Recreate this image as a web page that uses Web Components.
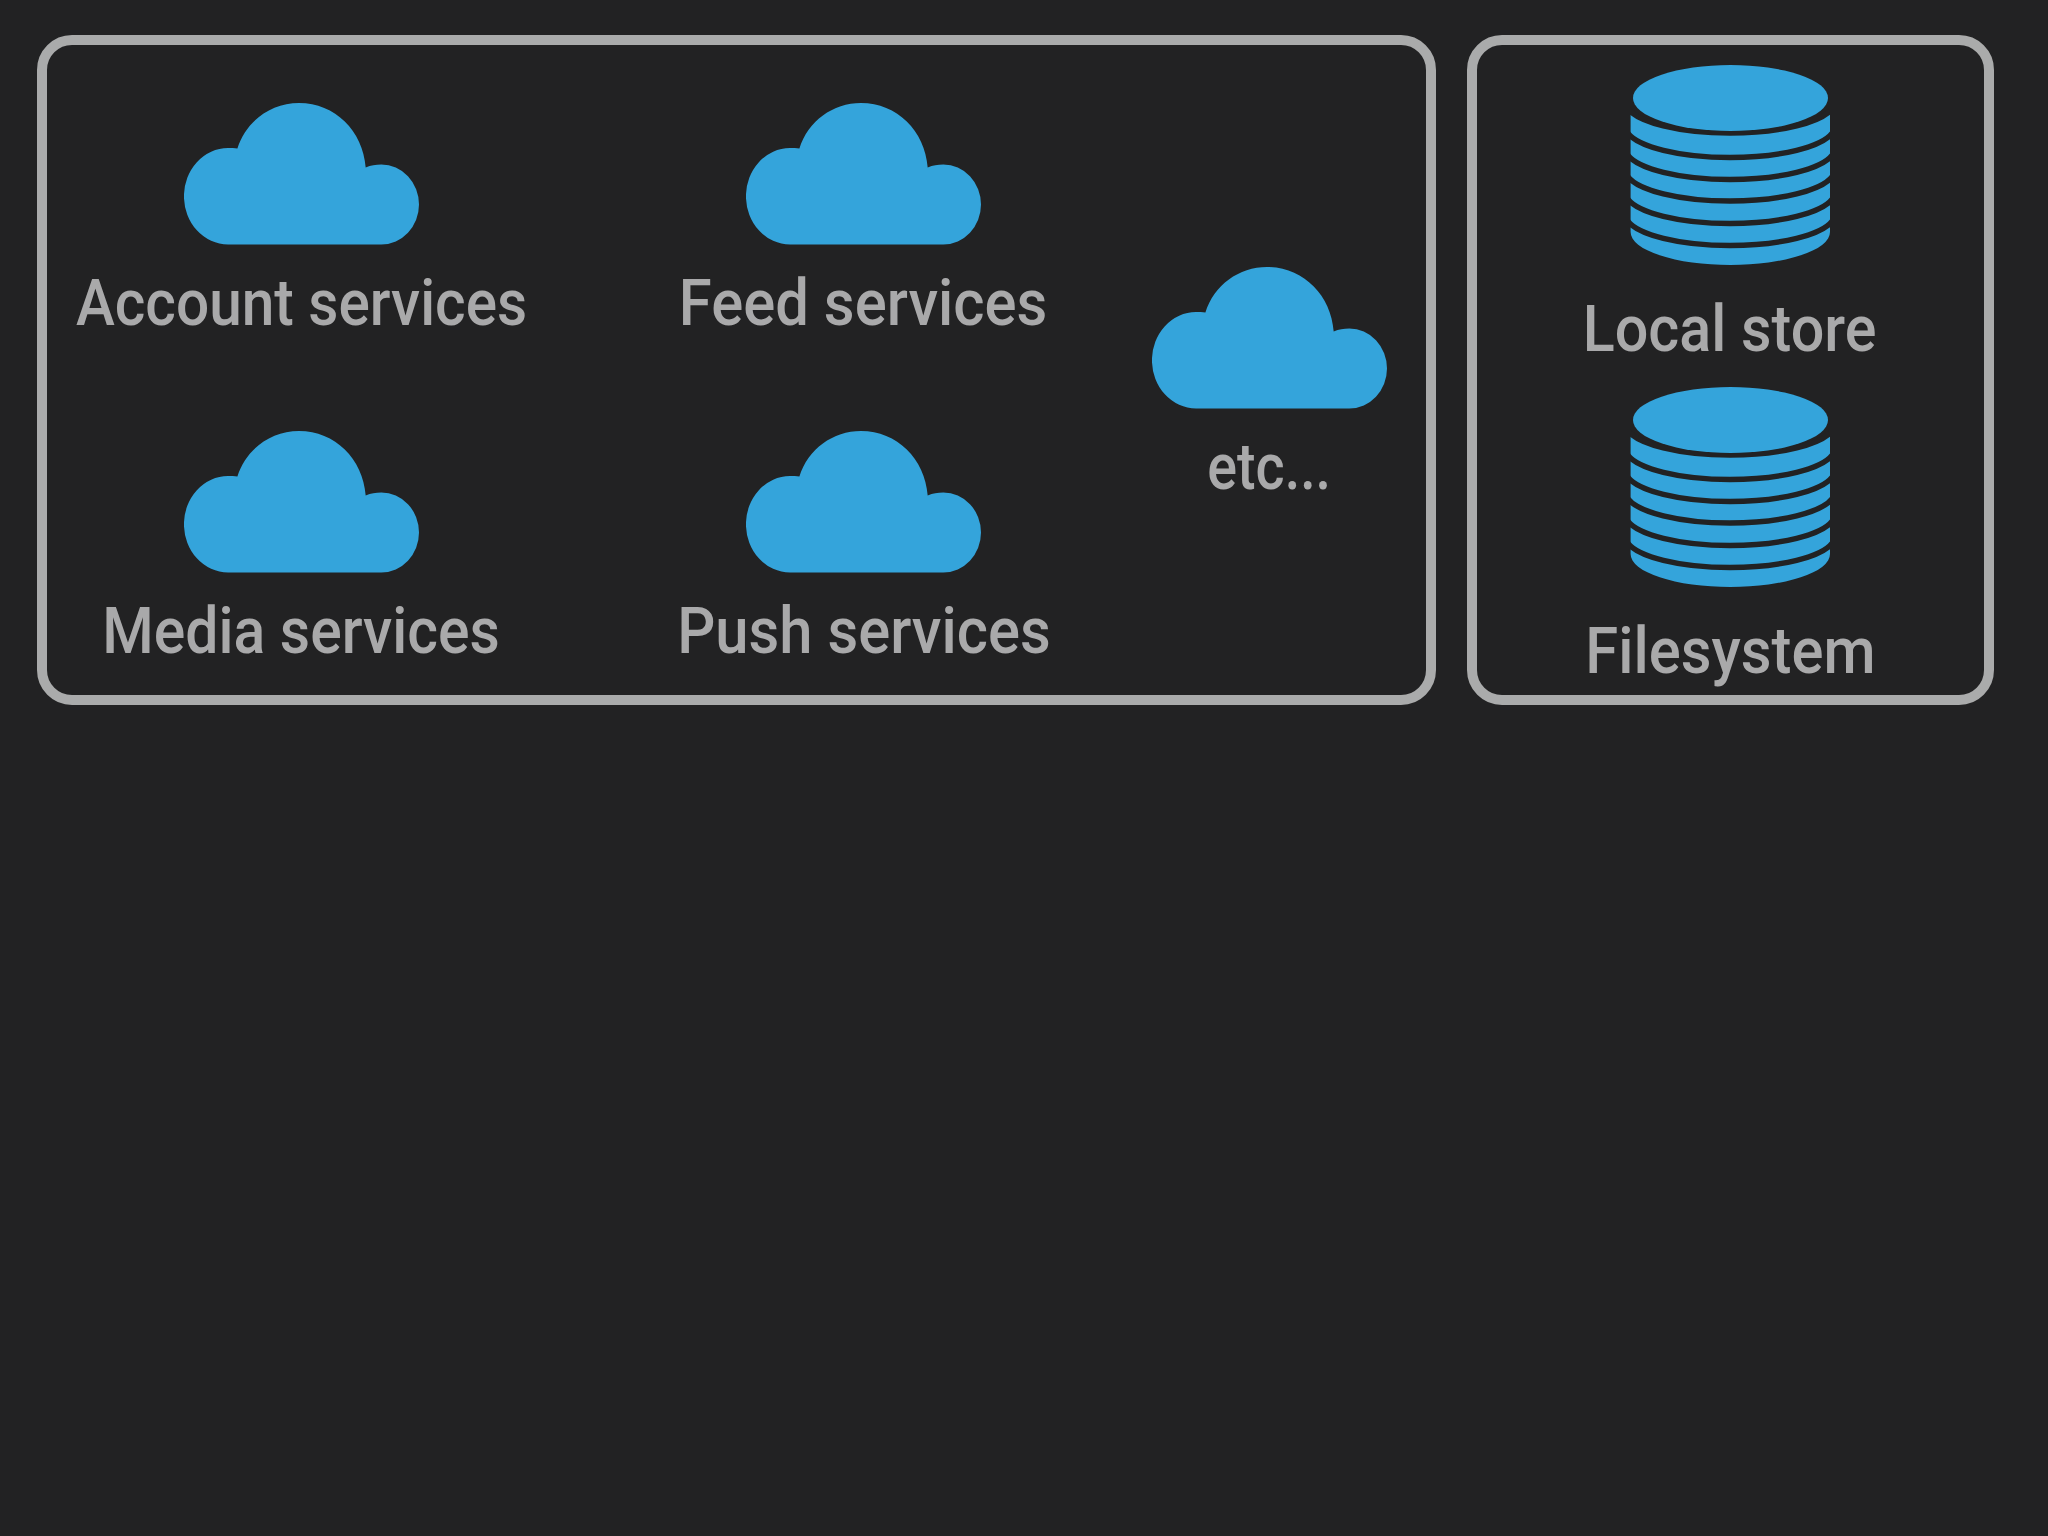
<!DOCTYPE html>
<html><head><meta charset="utf-8">
<style>
html,body{margin:0;background:#222223;height:100%}
body{padding:35px 0 0 37px;box-sizing:border-box;width:2048px;height:1536px;overflow:hidden}
</style></head>
<body>
<arch-diagram>
  <arch-group style="--w:1399px;--pt:58px;--pb:30px;--pl:29.5px">
    <service-grid>
      <cloud-item style="--sx:.915">Account services</cloud-item>
      <cloud-item style="--sx:.935">Feed services</cloud-item>
      <cloud-item style="--sx:.92">Media services</cloud-item>
      <cloud-item style="--sx:.934">Push services</cloud-item>
    </service-grid>
    <cloud-item style="margin-left:63.5px;--iw:235px;--sx:.87">etc...</cloud-item>
  </arch-group>
  <arch-group style="--w:527px;--pt:20px;--pb:0px;--pl:103px">
    <store-list>
      <db-item style="--sx:.926">Local store</db-item>
      <db-item style="--sx:.934">Filesystem</db-item>
    </store-list>
  </arch-group>
</arch-diagram>
<script>
const def=(name,html)=>customElements.define(name,class extends HTMLElement{
  constructor(){super();this.attachShadow({mode:'open'}).innerHTML=html;}
});
const blue='#34a4db';
const label=`.label{font:500 64px/70px Roboto,sans-serif;transform:scaleX(var(--sx,.92));color:#a9a9aa;white-space:nowrap;text-align:center}`;
def('arch-diagram',`<style>:host{display:flex;gap:31px;align-items:stretch}</style><slot></slot>`);
def('arch-group',`<style>:host{display:flex;align-items:center;box-sizing:border-box;width:var(--w);height:670px;border:10px solid #aaabab;border-radius:35px;padding:var(--pt) 0 var(--pb) var(--pl);flex:none}
:host(:last-child){align-items:flex-start}</style><slot></slot>`);
def('service-grid',`<style>:host{display:grid;grid-template-columns:450px 450px;column-gap:112px;row-gap:94px}</style><slot></slot>`);
def('store-list',`<style>:host{display:flex;flex-direction:column;align-items:center;width:300px}</style><slot></slot>`);
def('cloud-item',`<style>:host{display:flex;flex-direction:column;align-items:center;height:234px;width:var(--iw,auto)}
svg{display:block;width:235px;height:142px;flex:none;margin-bottom:24px}${label}</style>
<svg viewBox="0 0 235 142"><path fill="${blue}" d="M44 141.500A44 48.200 0 0 1 44 45C47 45 50.500 45.100 53.400 45.500C62 18 87 0 115 0C151 0 179 28 181.700 64.500C187 62.300 191.500 61.500 197.400 61.500A37.600 40 0 0 1 197.400 141.500Z"/></svg>
<div class="label"><slot></slot></div>`);
const arcs=[68,92.5,114.5,136,158.5,180.5].map(y=>`<path d="M-3 ${y-25.5}A105 31.700 0 0 0 203 ${y-25.5}" fill="none" stroke="#222223" stroke-width="5.500"/>`).join('');
def('db-item',`<style>:host{display:flex;flex-direction:column;align-items:center;height:322px}
svg{display:block;width:200px;height:200px;flex:none;overflow:hidden;margin-bottom:30px}${label}</style>
<svg viewBox="0 0 200 200"><path fill="${blue}" d="M.6 46A105 31.700 0 0 0 200 46V167A99.700 33 0 0 1 .6 167Z"/>
${arcs}<ellipse cx="100.500" cy="33" rx="97.500" ry="33" fill="${blue}"/></svg>
<div class="label"><slot></slot></div>`);
</script>
</body></html>
